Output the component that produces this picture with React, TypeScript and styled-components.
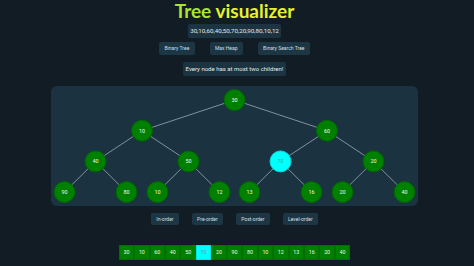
import React from 'react';
import styled, {createGlobalStyle} from 'styled-components';

const GlobalStyle = createGlobalStyle`
  html, body {
    margin: 0;
    padding: 0;
    background: #121c24;
    font-family: Roboto, "Liberation Sans", sans-serif;
  }
`;

const Page = styled.div`
  display: flex;
  flex-direction: column;
  align-items: center;
  width: 474px;
  height: 266px;
  padding-right: 5px;
  box-sizing: border-box;
  background: #121c24;
  overflow: hidden;
`;

const Title = styled.h1`
  margin: 0;
  height: 24px;
  font-family: Lato, "DejaVu Sans", sans-serif;
  font-weight: 700;
  font-size: 19px;
  line-height: 22px;
`;

const TitleWord = styled.span<{$color: string}>`
  color: ${p => p.$color};
`;

const NumbersBox = styled.div`
  height: 14px;
  padding: 0 2px;
  background: #1c3441;
  border-radius: 2px;
  color: #e2e8ea;
  font-size: 6.2px;
  line-height: 14px;
`;

const ButtonRow = styled.div<{$gap: number; $top: number}>`
  display: flex;
  gap: ${p => p.$gap}px;
  margin-top: ${p => p.$top}px;
`;

const Button = styled.button`
  height: 12.5px;
  padding: 0 5.3px;
  border: none;
  border-radius: 2px;
  background: #1c3743;
  color: #d6dee2;
  font-family: Roboto, "Liberation Sans", sans-serif;
  font-size: 5px;
  line-height: 12.5px;
`;

const Message = styled.div`
  margin-top: 7px;
  height: 14px;
  padding: 0 2.6px;
  background: #1c3441;
  border-radius: 2px;
  color: #e2e8ea;
  font-size: 6px;
  line-height: 14px;
`;

const Panel = styled.div`
  margin-top: 10px;
  width: 367px;
  height: 120px;
  background: #1b3340;
  border-radius: 6px;
`;

const ArrayRow = styled.div`
  display: flex;
  margin-top: 20px;
`;

const Cell = styled.div<{$active?: boolean}>`
  width: 15.45px;
  height: 15px;
  box-sizing: border-box;
  border: 1px solid ${p => (p.$active ? '#00e5e5' : '#006f00')};
  background: ${p => (p.$active ? '#00ffff' : '#008000')};
  color: ${p => (p.$active ? '#6a9aa0' : '#eef6ee')};
  font-size: 5.3px;
  line-height: 13px;
  text-align: center;
`;

const values = [30, 10, 60, 40, 50, 70, 20, 90, 80, 10, 12, 13, 16, 20, 40];
const active = 5;

const W = 367;
const offsets = [92.5, 46.5, 31];
const levelY = (d: number) => 14 + 30.7 * d;

type Pos = {x: number; y: number};

function layout(): Pos[] {
  const pos: Pos[] = [];
  pos[0] = {x: W / 2, y: levelY(0)};
  for (let i = 1; i < values.length; i++) {
    const parent = Math.floor((i - 1) / 2);
    const depth = Math.floor(Math.log2(i + 1));
    const dir = i % 2 === 1 ? -1 : 1;
    pos[i] = {x: pos[parent].x + dir * offsets[depth - 1], y: levelY(depth)};
  }
  return pos;
}

const Tree: React.FC = () => {
  const pos = layout();
  return (
    <svg width={W} height={120} viewBox={`0 0 ${W} 120`}>
      {pos.map((p, i) =>
        i === 0 ? null : (
          <line
            key={`l${i}`}
            x1={pos[Math.floor((i - 1) / 2)].x}
            y1={pos[Math.floor((i - 1) / 2)].y}
            x2={p.x}
            y2={p.y}
            stroke="#9aaab2"
            strokeWidth={0.8}
          />
        )
      )}
      {pos.map((p, i) => (
        <g key={`n${i}`}>
          <circle
            cx={p.x}
            cy={p.y}
            r={10.5}
            fill={i === active ? '#00ffff' : '#008000'}
            stroke={i === active ? '#00d8d8' : '#006400'}
            strokeWidth={1}
          />
          <text
            x={p.x}
            y={p.y + 1.9}
            textAnchor="middle"
            fontSize={5.4}
            fontFamily="Roboto, sans-serif"
            fill={i === active ? '#5f9aa0' : '#f0f6f0'}
          >
            {values[i]}
          </text>
        </g>
      ))}
    </svg>
  );
};

const App: React.FC = () => {
  return (
    <Page>
      <GlobalStyle />
      <Title>
        <TitleWord $color="#a9e62b">Tree</TitleWord> <TitleWord $color="#e6f22d">visualizer</TitleWord>
      </Title>
      <NumbersBox>30,10,60,40,50,70,20,90,80,10,12</NumbersBox>
      <ButtonRow $gap={15} $top={4}>
        <Button>Binary Tree</Button>
        <Button>Max Heap</Button>
        <Button>Binary Search Tree</Button>
      </ButtonRow>
      <Message>Every node has at most two children!</Message>
      <Panel>
        <Tree />
      </Panel>
      <ButtonRow $gap={13} $top={7}>
        <Button>In-order</Button>
        <Button>Pre-order</Button>
        <Button>Post-order</Button>
        <Button>Level-order</Button>
      </ButtonRow>
      <ArrayRow>
        {values.map((v, i) => (
          <Cell key={i} $active={i === active}>
            {v}
          </Cell>
        ))}
      </ArrayRow>
    </Page>
  );
};

export default App;
